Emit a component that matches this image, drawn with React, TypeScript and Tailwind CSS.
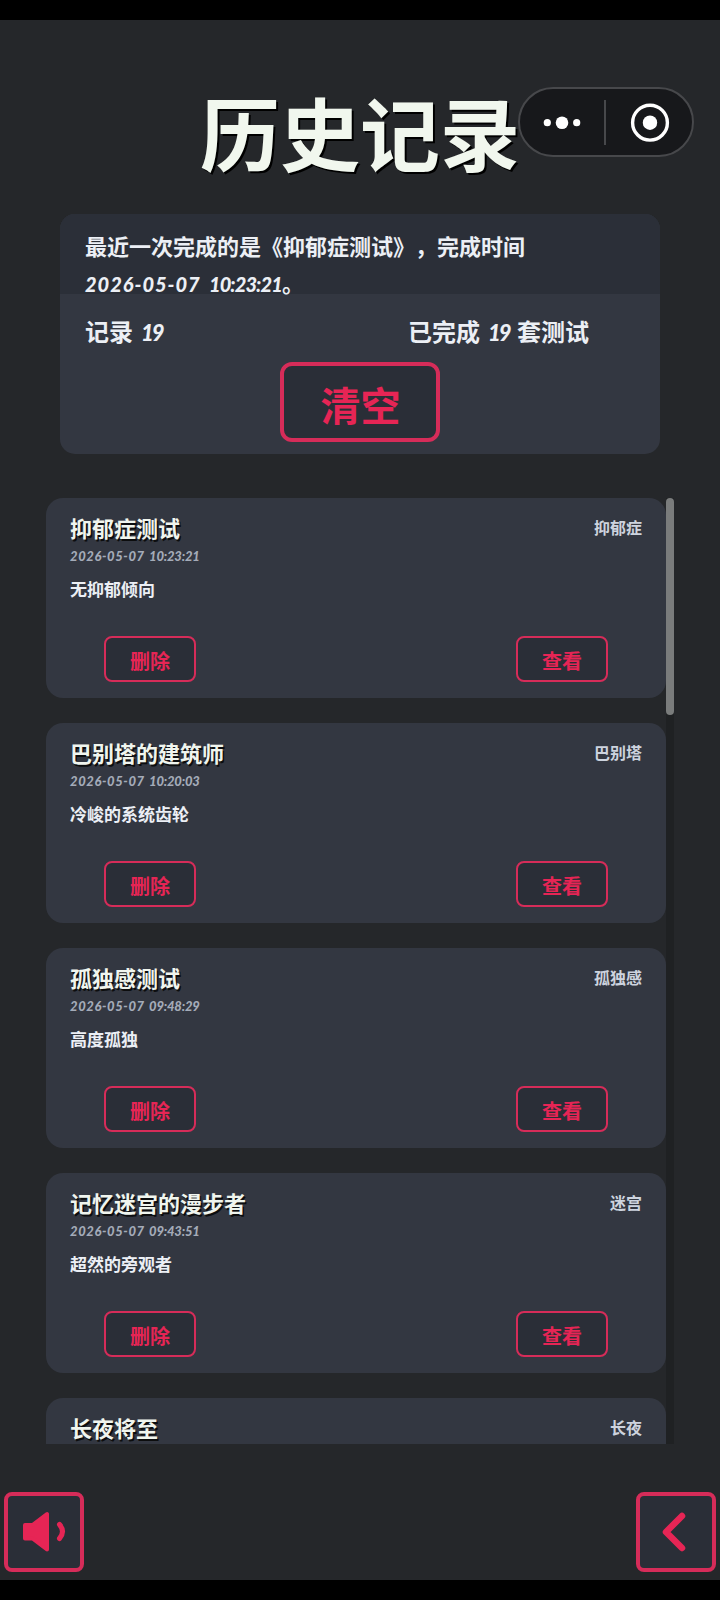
type Entry = {
  title: string
  date: string
  time: string
  result: string
  tag: string
}

const entries: Entry[] = [
  { title: '抑郁症测试', date: '2026-05-07', time: '10:23:21', result: '无抑郁倾向', tag: '抑郁症' },
  { title: '巴别塔的建筑师', date: '2026-05-07', time: '10:20:03', result: '冷峻的系统齿轮', tag: '巴别塔' },
  { title: '孤独感测试', date: '2026-05-07', time: '09:48:29', result: '高度孤独', tag: '孤独感' },
  { title: '记忆迷宫的漫步者', date: '2026-05-07', time: '09:43:51', result: '超然的旁观者', tag: '迷宫' },
  { title: '长夜将至', date: '', time: '', result: '', tag: '长夜' },
]

function Capsule() {
  return (
    <div className="absolute left-[518px] top-[67px] flex h-[70px] w-[176px] items-center rounded-full border-2 border-[#47484b] bg-[#17181b]">
      <svg width="172" height="66" viewBox="0 0 172 66">
        <g fill="#fff">
          <circle cx="27.300" cy="33.700" r="3.600" />
          <circle cx="42" cy="33.700" r="6.300" />
          <circle cx="56.700" cy="33.700" r="3.600" />
          <circle cx="130" cy="33.700" r="7.200" />
        </g>
        <path d="M85 11v45" stroke="#47484b" strokeWidth="2" />
        <circle cx="130" cy="33.700" r="17.400" fill="none" stroke="#fff" strokeWidth="3.400" />
      </svg>
    </div>
  )
}

function Summary() {
  return (
    <section className="mx-[60px] h-[240px] overflow-hidden rounded-[15px] bg-[#333741] text-[#eceff5]">
      <div className="h-20 bg-[#2b2f38] px-[25px] pt-[13px] text-[22px] leading-[37px]">
        <p className="h-[37px] whitespace-nowrap [text-spacing-trim:space-all]">
          最近一次完成的是《抑郁症测试》，完成时间
        </p>
        <p className="h-[37px] whitespace-nowrap">
          <span className="font-['Lato',sans-serif] text-xl leading-[37px] font-black italic">
            <span className="tracking-[1px]">2026-05-07 </span>
            <span className="ml-[3px] tracking-[-0.9px]">10:23:21</span>
          </span>
          。
        </p>
      </div>
      <div className="flex h-[68px] pl-[25px] pt-[19px] text-2xl leading-9">
        <p className="w-[323px]">
          记录
          <span className="ml-2 font-['Lato',sans-serif] text-[22px] font-black italic tracking-[-2px]">19</span>
        </p>
        <p>
          已完成
          <span className="mr-[7px] ml-2 inline-block w-[22px] font-['Lato',sans-serif] text-[22px] font-black italic tracking-[-2px]">
            19
          </span>
          套测试
        </p>
      </div>
      <button className="mx-auto block h-20 w-40 rounded-[12px] border-4 border-[#d62c59] bg-[#2a2e37] pt-[4px] pl-[1px] text-[40px] leading-[66px] text-[#e62555]">
        清空
      </button>
    </section>
  )
}

function CardButton({ label }: { label: string }) {
  return (
    <button className="h-[46px] w-[92px] rounded-lg border-2 border-[#d62c59] bg-[#2a2e37] pt-1 text-xl leading-9 text-[#e62555]">
      {label}
    </button>
  )
}

function Card({ entry }: { entry: Entry }) {
  return (
    <article className="h-[200px] shrink-0 rounded-[17px] bg-[#333741] px-6 pt-[14px]">
      <div className="flex h-8 justify-between">
        <h2 className="text-[22px] leading-[30px] text-[#f0f5ee] [text-shadow:1.5px_1.5px_0_#0c0d0e]">{entry.title}</h2>
        <span className="pt-[1px] text-base leading-7 text-[#cdd3de]">{entry.tag}</span>
      </div>
      <p className="h-6 pt-[3px] font-['Lato',sans-serif] text-[13px] leading-[18px] font-black text-[#a4abb8] italic">
        <span className="tracking-[0.6px]">{entry.date} </span>
        <span className="ml-[1px] tracking-[-0.2px]">{entry.time}</span>
      </p>
      <p className="h-[68px] pt-[7px] text-[17px] leading-7 text-[#eceff5]">{entry.result}</p>
      {entry.result && (
        <div className="flex justify-between px-[34px]">
          <CardButton label="删除" />
          <CardButton label="查看" />
        </div>
      )}
    </article>
  )
}

function App() {
  return (
    <div className="h-[1600px] w-[720px] bg-black py-5 font-['Noto_Sans_CJK_SC',sans-serif] font-bold">
      <div className="relative flex h-[1560px] flex-col overflow-hidden bg-[#25272a]">
        <h1 className="h-[194px] pt-[50px] text-center text-[80px] leading-[120px] text-[#f1f7ee] [text-shadow:2px_2px_0_#000]">
          历史记录
        </h1>
        <Capsule />
        <Summary />
        <main className="mt-11 ml-[46px] flex h-[946px] w-[628px] overflow-hidden">
          <div className="flex w-[620px] flex-col gap-[25px]">
            {entries.map((entry) => (
              <Card key={entry.title} entry={entry} />
            ))}
          </div>
          <div className="h-full w-2 bg-[#1f2123]">
            <div className="h-[217px] rounded-full bg-[#7a7c7c]" />
          </div>
        </main>
        <footer className="mt-12 flex justify-between px-1">
          <button className="size-20 rounded-lg border-4 border-[#d62c59] bg-[#2a2e37]">
            <svg width="72" height="72" viewBox="0 0 72 72">
              <path
                d="M17 29h7.500L39 18v35.500L24.500 42.500h-7.500z"
                fill="#e62555"
                stroke="#e62555"
                strokeWidth="4"
                strokeLinejoin="round"
              />
              <path d="M51.500 28.500q6 7 0 14" fill="none" stroke="#e62555" strokeWidth="5" strokeLinecap="round" />
            </svg>
          </button>
          <button className="size-20 rounded-lg border-4 border-[#d62c59] bg-[#2a2e37]">
            <svg width="72" height="72" viewBox="0 0 72 72">
              <path
                d="M42 20 26 36l16 16"
                fill="none"
                stroke="#e62555"
                strokeWidth="6.500"
                strokeLinecap="round"
                strokeLinejoin="round"
              />
            </svg>
          </button>
        </footer>
      </div>
    </div>
  )
}

export default App
